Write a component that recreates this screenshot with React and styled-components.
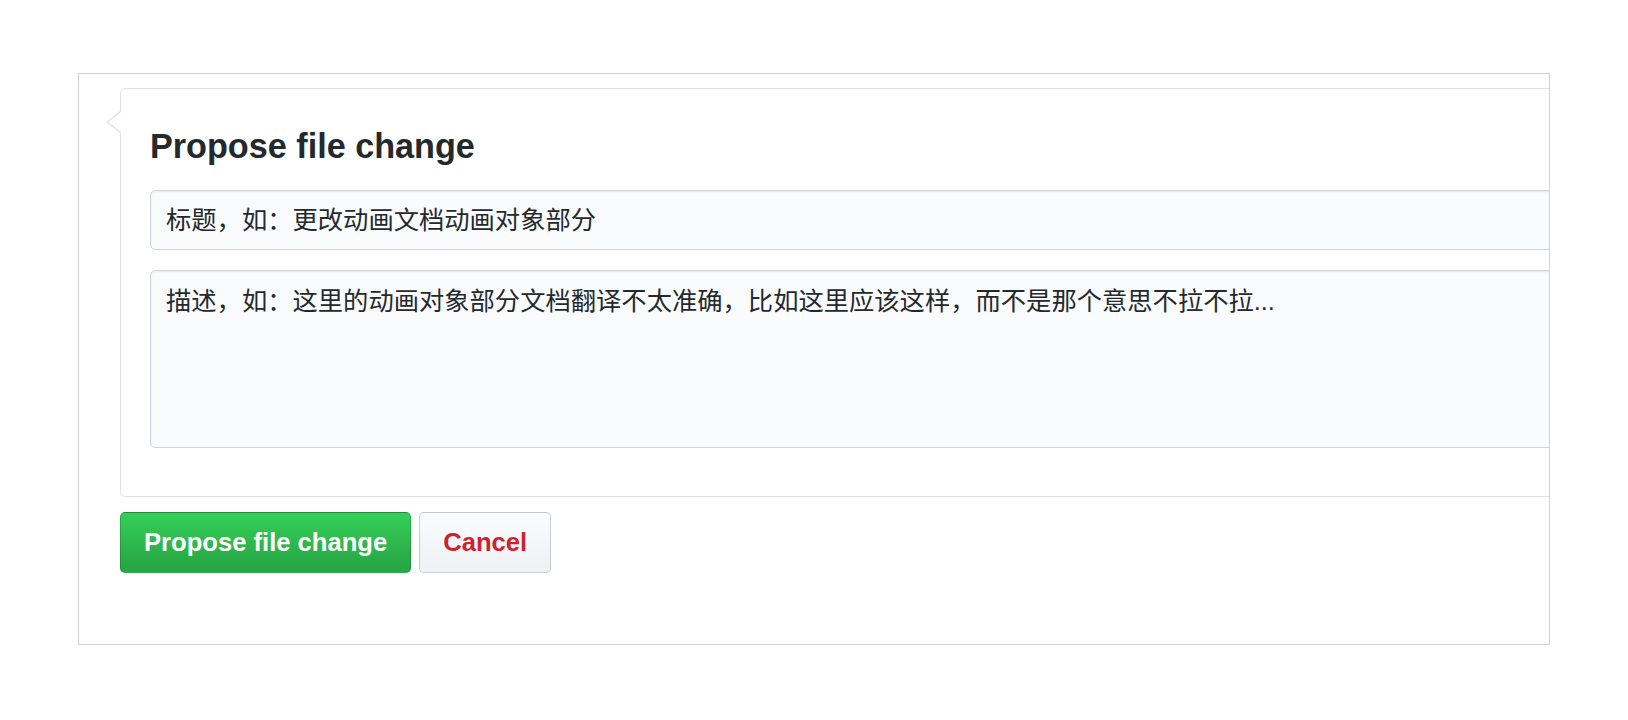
import React from "react";
import styled, { createGlobalStyle } from "styled-components";

const Global = createGlobalStyle`
  html, body { margin: 0; padding: 0; background: #ffffff; }
  body { font-family: "Liberation Sans", "Noto Sans CJK SC", Arial, sans-serif; color: #24292e; }
  * { box-sizing: border-box; }
`;

const Page = styled.div`
  padding: 73px 0 0 78px;
`;

const Frame = styled.div`
  width: 1472px;
  height: 572px;
  border: 1px solid #cfd2d6;
  overflow: hidden;
  padding: 14px 0 0 41px;
`;

const Panel = styled.div`
  position: relative;
  width: 1560px;
  border: 1px solid #dfe2e5;
  border-radius: 5px;
  background: #fff;
  padding: 36px 0 48px 29px;

  &::before,
  &::after {
    content: "";
    position: absolute;
    width: 0;
    height: 0;
    border-style: solid;
    border-color: transparent;
  }
  &::before {
    top: 22px;
    left: -15px;
    border-width: 11px 14px 11px 0;
    border-right-color: #dfe2e5;
  }
  &::after {
    top: 23px;
    left: -13px;
    border-width: 10px 13px 10px 0;
    border-right-color: #ffffff;
  }
`;

const Title = styled.h2`
  margin: 0 0 23px 0;
  font-size: 34.2px;
  line-height: 42px;
  font-weight: 700;
  color: #24292e;
`;

const Field = styled.div`
  display: flex;
  align-items: ${(p) => (p.$multi ? "flex-start" : "center")};
  height: ${(p) => (p.$multi ? "178px" : "60px")};
  margin-top: ${(p) => (p.$multi ? "20px" : "0")};
  padding: ${(p) => (p.$multi ? "12px 15px" : "0 15px")};
  background: #fafbfc;
  border: 1px solid #d1d5da;
  border-radius: 5px;
  box-shadow: inset 0 1px 2px rgba(27, 31, 35, 0.075);
  font-family: "Liberation Sans", "Noto Sans CJK SC", sans-serif;
  font-size: 25.3px;
  line-height: 36.6px;
  color: #24292e;
  white-space: nowrap;
`;

const Actions = styled.div`
  display: flex;
  gap: 8px;
  margin-top: 15px;
`;

const Button = styled.button`
  height: 61px;
  padding: 0 23px;
  border: 1px solid rgba(27, 31, 35, 0.2);
  border-radius: 5px;
  font-family: "Liberation Sans", Arial, sans-serif;
  font-size: 25.6px;
  font-weight: 700;
  line-height: 36.6px;
  cursor: pointer;
  color: ${(p) => (p.$primary ? "#ffffff" : "#cb2431")};
  background: ${(p) =>
    p.$primary
      ? "linear-gradient(-180deg, #34d058 0%, #28a745 90%)"
      : "linear-gradient(-180deg, #fafbfc 0%, #eff3f6 90%)"};
`;

export default function App() {
  return (
    <>
      <Global />
      <Page>
        <Frame>
          <Panel>
            <Title>Propose file change</Title>
            <Field>标题，如：更改动画文档动画对象部分</Field>
            <Field $multi>
              描述，如：这里的动画对象部分文档翻译不太准确，比如这里应该这样，而不是那个意思不拉不拉...
            </Field>
          </Panel>
          <Actions>
            <Button $primary>Propose file change</Button>
            <Button>Cancel</Button>
          </Actions>
        </Frame>
      </Page>
    </>
  );
}
